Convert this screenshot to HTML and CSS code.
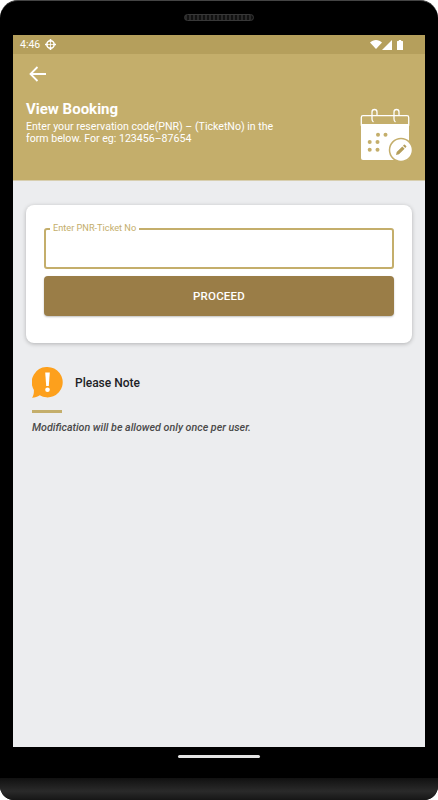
FILE: index.html
```html
<!DOCTYPE html>
<html lang="en">
<head>
    <meta charset="UTF-8">
    <meta name="viewport" content="width=device-width, initial-scale=1.0">
    <title>View Booking</title>
    <link rel="stylesheet" href="styles.css">
</head>
<body>
    <div class="phone">
        <div class="bezel-top">
            <div class="speaker"></div>
        </div>

        <div class="screen">
            <div class="status-bar">
                <div class="status-left">
                    <span>4:46</span>
                    <svg width="11" height="11" viewBox="0 0 11 11" fill="none" stroke="#fff">
                        <circle cx="5.5" cy="5.5" r="3.7" stroke-width="1.5"/>
                        <path d="M5.5 0v3M5.5 8v3M0 5.5h3M8 5.5h3" stroke-width="1.6"/>
                        <path d="M5.5 3v5M3 5.5h5" stroke-width="0.8"/>
                    </svg>
                </div>
                <div class="status-right">
                    <svg width="12" height="9" viewBox="0 0 12 9"><path d="M0 2.6C3.4-.8 8.6-.8 12 2.6L6 9z" fill="#fff"/></svg>
                    <svg width="10" height="10" viewBox="0 0 10 10"><path d="M0 10L10 0v10z" fill="#fff"/></svg>
                    <svg class="battery" width="6" height="10" viewBox="0 0 6 10"><path d="M1.8 0h2.4v1h1.3q.5 0 .5.6v7.8q0 .6-.5.6H.5q-.5 0-.5-.6V1.6q0-.6.5-.6h1.3z" fill="#fff"/></svg>
                </div>
            </div>

            <div class="header">
                <svg class="back-icon" width="18" height="16" viewBox="0 0 18 16" fill="none" stroke="#fff" stroke-width="1.8">
                    <path d="M17 8H2M8.5 1L1.5 8l7 7"/>
                </svg>
                <div class="header-row">
                    <div class="header-text">
                        <h1>View Booking</h1>
                        <p>Enter your reservation code(PNR) – (TicketNo) in the form below. For eg: 123456–87654</p>
                    </div>
                    <svg class="calendar-icon" width="54" height="62" viewBox="0 0 54 62">
                        <path d="M3 14.7h44q1.7 0 1.7 1.7V24H1.3v-7.6q0-1.7 1.7-1.7z" fill="none" stroke="#fff" stroke-width="1.3"/>
                        <path d="M1 23h48v34q0 2-2 2H3q-2 0-2-2z" fill="#fff"/>
                        <path d="M17 14v-3q0-2.500-2.500-2.500T12 11v7q0 2 1.500 3M39 14v-3q0-2.500-2.500-2.500T34 11v7q0 2 1.500 3" fill="none" stroke="#fff" stroke-width="1.3"/>
                        <g fill="#c4ae6b">
                            <circle cx="18" cy="33.7" r="2"/>
                            <circle cx="25.5" cy="33.7" r="2"/>
                            <circle cx="9.7" cy="41" r="2"/>
                            <circle cx="17.5" cy="41" r="2"/>
                            <circle cx="9.7" cy="48.7" r="2"/>
                            <circle cx="17.5" cy="48.7" r="2"/>
                        </g>
                        <circle cx="41" cy="49" r="11.5" fill="#fff" stroke="#c4ae6b" stroke-width="1.5"/>
                        <path d="M36 54l.7-3 5.6-5.600 2.300 2.300-5.600 5.600zM43 44.700l.9-.9q.5-.5 1 0l1.300 1.300q.5.5 0 1l-.9.9z" fill="#b59f5c"/>
                    </svg>
                </div>
            </div>

            <div class="content">
                <div class="card">
                    <div class="field">
                        <span class="field-label">Enter PNR-Ticket No</span>
                    </div>
                    <button class="proceed-button">PROCEED</button>
                </div>

                <div class="note">
                    <div class="note-head">
                        <svg width="31" height="31" viewBox="0 0 31 31">
                            <path d="M15.5 0a15.2 15.2 0 1 1-7.700 28.300C5.500 29.800 3 30.500 0 30.800c1.400-2 2-4.300 1.900-7.900A15.200 15.200 0 0 1 15.500 0z" fill="#fda01c"/>
                            <path d="M13.200 5.500h4.600l-1 13.500h-2.600z" fill="#fff"/>
                            <circle cx="15.5" cy="22.7" r="2.3" fill="#fff"/>
                        </svg>
                        <span class="note-title">Please Note</span>
                    </div>
                    <div class="note-line"></div>
                    <p class="note-text">Modification will be allowed only once per user.</p>
                </div>
            </div>
        </div>

        <div class="bezel-bottom">
            <div class="home-bar"></div>
        </div>
        <div class="chin"></div>
    </div>
</body>
</html>
```

FILE: styles.css
```css
* {
    margin: 0;
    padding: 0;
    box-sizing: border-box;
}

body {
    font-family: Roboto, sans-serif;
    background: #fff;
    width: 438px;
    height: 800px;
    overflow: hidden;
}

.phone {
    width: 438px;
    height: 800px;
    background: #000;
    border-radius: 18px 18px 14px 14px;
    border-top: 1px solid #444;
    display: flex;
    flex-direction: column;
    overflow: hidden;
}

.bezel-top {
    height: 34px;
    flex-shrink: 0;
    padding-top: 13px;
}

.speaker {
    width: 70px;
    height: 7px;
    margin: 0 auto;
    background: repeating-linear-gradient(90deg, #2a2a2a 0, #2a2a2a 2px, #111 2px, #111 4px);
    border: 1px solid #383838;
    border-radius: 4px;
}

.screen {
    height: 712px;
    margin: 0 13px;
    width: 412px;
    flex-shrink: 0;
    background: #ecedef;
    display: flex;
    flex-direction: column;
}

.status-bar {
    height: 19px;
    background: #b59f5c;
    color: #fff;
    font-size: 10.5px;
    display: flex;
    align-items: center;
    justify-content: space-between;
    padding: 0 22px 0 7px;
}

.status-left {
    display: flex;
    align-items: center;
    gap: 5px;
}

.status-right {
    display: flex;
    align-items: center;
}

.battery {
    margin-left: 5px;
}

.header {
    height: 127px;
    background: #c4ae6b;
    color: #fff;
    padding: 12px 13px 0;
    border-bottom: 1px solid #d8cfb0;
}

.back-icon {
    display: block;
    margin-left: 3px;
}

.header-row {
    display: flex;
    justify-content: space-between;
    margin-top: 17px;
}

.header-text {
    width: 256px;
}

.header h1 {
    font-size: 15px;
    font-weight: 700;
    line-height: 20px;
}

.header p {
    margin-top: 2px;
    font-size: 10.6px;
    line-height: 12px;
}

.calendar-icon {
    margin: 2px -2px 0 0;
}

.content {
    flex: 1;
    padding: 24px 13px 0;
}

.card {
    height: 138px;
    background: #fff;
    border-radius: 8px;
    box-shadow: 0 1px 4px rgba(0, 0, 0, 0.25);
    padding: 23px 18px 0;
}

.field {
    height: 41px;
    border: 2px solid #c4ae6b;
    border-radius: 3px;
    position: relative;
}

.field-label {
    position: absolute;
    top: -8px;
    left: 4px;
    padding: 0 3px;
    background: #fff;
    color: #c4ae6b;
    font-size: 9.2px;
    line-height: 11px;
}

.proceed-button {
    display: block;
    width: 100%;
    height: 40px;
    margin-top: 7px;
    background: #9a7d47;
    border: none;
    border-radius: 4px;
    box-shadow: 0 1px 2px rgba(0, 0, 0, 0.25);
    color: #fff;
    font-family: Roboto, sans-serif;
    font-size: 11.5px;
    font-weight: 500;
    letter-spacing: 0.2px;
}

.note {
    padding: 24px 6px 0;
}

.note-head {
    display: flex;
    align-items: center;
    gap: 12px;
}

.note-title {
    color: #1d2226;
    font-size: 12px;
    font-weight: 500;
}

.note-line {
    width: 30px;
    height: 3px;
    margin-top: 12px;
    background: #c4ae6b;
}

.note-text {
    margin-top: 8px;
    color: #4a4a4a;
    font-size: 10.7px;
    font-style: italic;
    font-weight: 500;
    line-height: 13px;
}

.bezel-bottom {
    height: 31px;
    flex-shrink: 0;
    padding-top: 8px;
}

.home-bar {
    width: 82px;
    height: 3px;
    margin: 0 auto;
    background: #e4e4e4;
    border-radius: 2px;
}

.chin {
    flex: 1;
    background: linear-gradient(#111, #2a2a2a 60%, #161616);
}
```
